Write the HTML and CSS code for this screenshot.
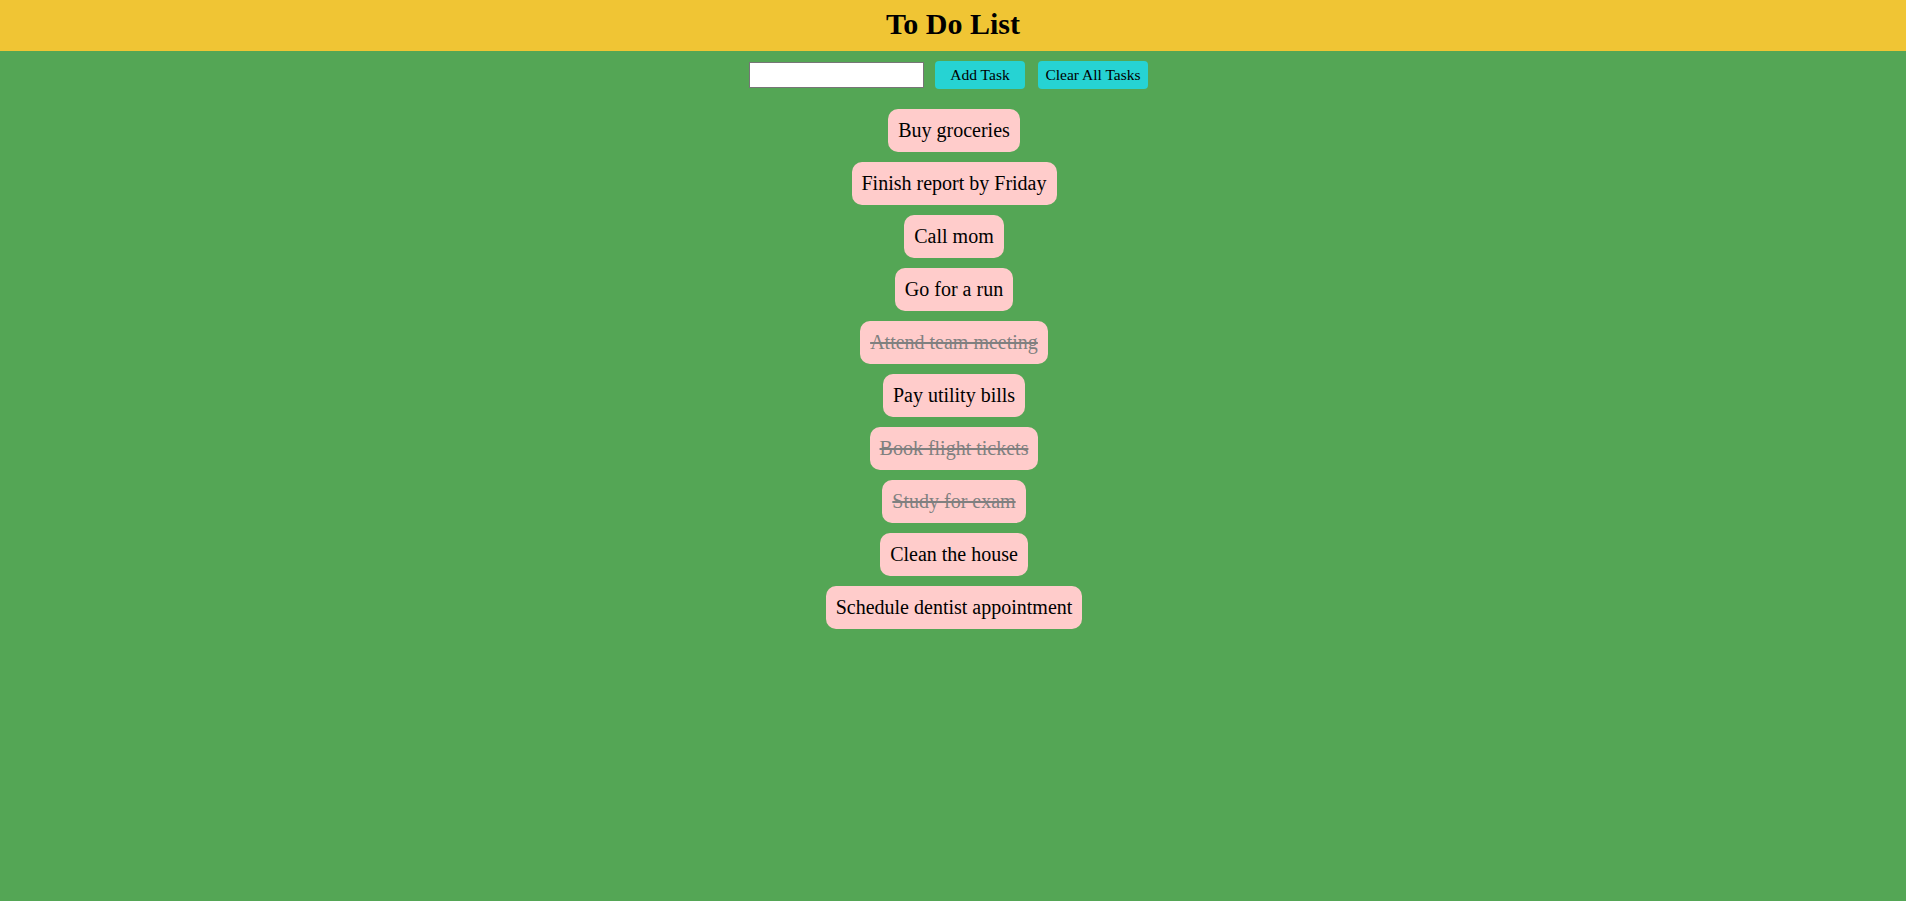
FILE: index.html
```html
<!DOCTYPE html>
<html>
<head>
<meta charset="utf-8">
<title>To Do List</title>
<link rel="stylesheet" href="styles.css">
</head>
<body>
<header class="header"><h1 class="title">To Do List</h1></header>
<div class="controls">
  <input class="task-input" type="text">
  <button class="btn btn-add">Add Task</button>
  <button class="btn btn-clear">Clear All Tasks</button>
</div>
<ul class="tasks">
  <li class="task">Buy groceries</li>
  <li class="task">Finish report by Friday</li>
  <li class="task">Call mom</li>
  <li class="task">Go for a run</li>
  <li class="task done">Attend team meeting</li>
  <li class="task">Pay utility bills</li>
  <li class="task done">Book flight tickets</li>
  <li class="task done">Study for exam</li>
  <li class="task">Clean the house</li>
  <li class="task">Schedule dentist appointment</li>
</ul>
</body>
</html>
```
FILE: styles.css
```css
html, body {
  margin: 0;
  padding: 0;
  height: 100%;
}
body {
  background: #54a655;
  font-family: "Liberation Serif", "Times New Roman", serif;
  color: #000;
}
.header {
  box-sizing: border-box;
  background: #f0c534;
  height: 51px;
  padding-bottom: 4px;
  display: flex;
  align-items: center;
  justify-content: center;
}
.title {
  margin: 0;
  font-size: 30px;
  font-weight: bold;
  line-height: 1;
}
.controls {
  display: flex;
  justify-content: center;
  align-items: center;
  margin-top: 10px;
  height: 28px;
}
.task-input {
  box-sizing: border-box;
  width: 175px;
  height: 26px;
  border: 1px solid #767676;
  background: #fff;
  margin: 0 11px 0 0;
  padding: 0;
}
.btn {
  box-sizing: border-box;
  height: 28px;
  border: none;
  border-radius: 4px;
  background: #26d3d3;
  font-family: "Liberation Serif", "Times New Roman", serif;
  font-size: 15.5px;
  color: #000;
  padding: 0;
}
.btn-add {
  width: 90px;
  margin-right: 13px;
}
.btn-clear {
  width: 110px;
  margin-right: 9px;
}
.tasks {
  list-style: none;
  margin: 20px 0 0 0;
  padding: 0 0 0 2px;
  display: flex;
  flex-direction: column;
  align-items: center;
  gap: 10px;
}
.task {
  background: #ffcccb;
  border-radius: 10px;
  padding: 10px;
  font-size: 20px;
  line-height: 23px;
}
.done {
  text-decoration: line-through;
  color: #808080;
}
```
